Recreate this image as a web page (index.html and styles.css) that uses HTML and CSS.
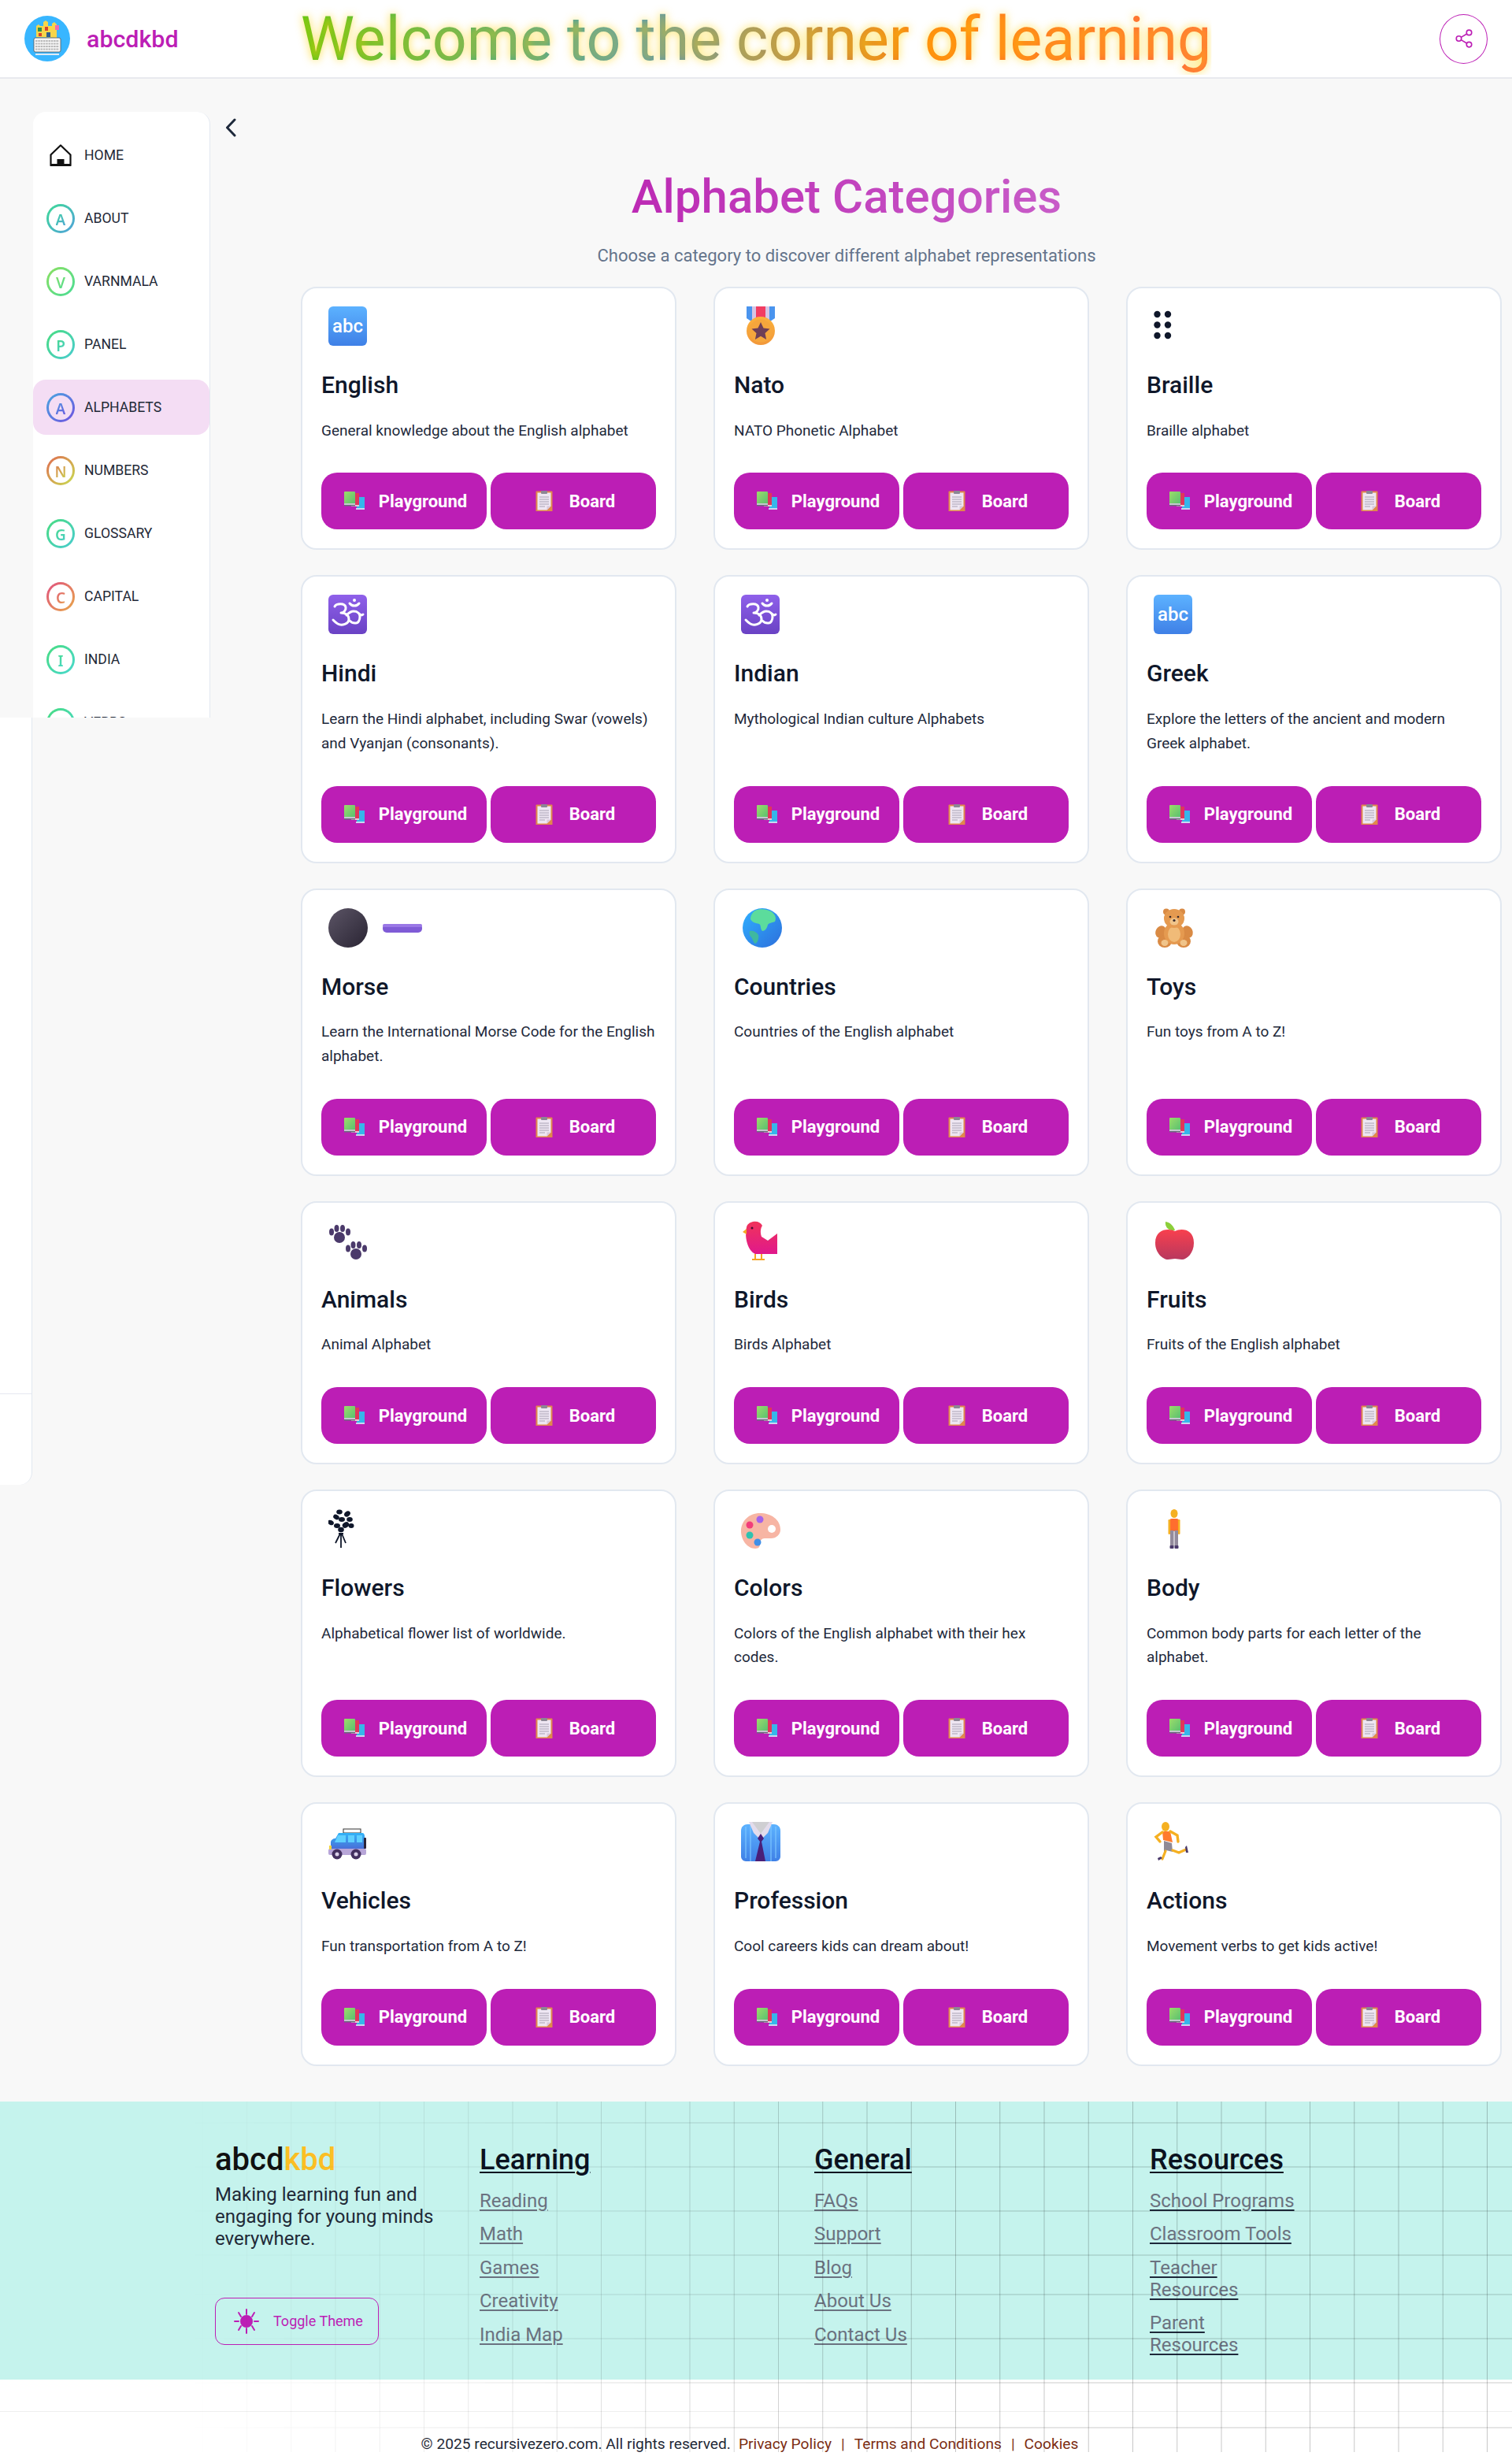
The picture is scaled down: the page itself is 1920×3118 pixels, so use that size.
FILE: index.html
```html
<!DOCTYPE html>
<html lang="en">
<head>
<meta charset="utf-8">
<title>abcdkbd</title>
<link rel="stylesheet" href="styles.css">
</head>
<body>
<svg class="defs" aria-hidden="true">
  <defs>
    <linearGradient id="g-blue" x1="0" y1="0" x2="0" y2="1"><stop offset="0" stop-color="#5cb2ff"/><stop offset="1" stop-color="#3f80e6"/></linearGradient>
    <linearGradient id="g-purple" x1="0" y1="0" x2="0" y2="1"><stop offset="0" stop-color="#8f60ea"/><stop offset="1" stop-color="#6a42c4"/></linearGradient>
    <linearGradient id="g-dark" x1="0" y1="0" x2="1" y2="1"><stop offset="0" stop-color="#5c5566"/><stop offset="1" stop-color="#2a2433"/></linearGradient>
    <linearGradient id="g-globe" x1="0" y1="0" x2="1" y2="1"><stop offset="0" stop-color="#2fb0ff"/><stop offset="1" stop-color="#2d6fdc"/></linearGradient>
    <linearGradient id="g-bird" x1="0" y1="0" x2="0" y2="1"><stop offset="0" stop-color="#f0345a"/><stop offset="1" stop-color="#e0188c"/></linearGradient>
    <linearGradient id="g-apple" x1="0" y1="0" x2="0" y2="1"><stop offset="0" stop-color="#f8404e"/><stop offset="1" stop-color="#b8385e"/></linearGradient>
    <linearGradient id="g-gold" x1="0" y1="0" x2="0" y2="1"><stop offset="0" stop-color="#fbb13c"/><stop offset="1" stop-color="#f2983a"/></linearGradient>
    <linearGradient id="g-book" x1="0" y1="0" x2="1" y2="1"><stop offset="0" stop-color="#9ddc6a"/><stop offset="1" stop-color="#58c070"/></linearGradient>
    <linearGradient id="g-car" x1="0" y1="0" x2="0" y2="1"><stop offset="0" stop-color="#32b4f8"/><stop offset="1" stop-color="#4a6fd8"/></linearGradient>

    <symbol id="i-abc" viewBox="0 0 120 50"><rect x="0" y="0" width="49" height="50" rx="6" fill="url(#g-blue)"/><text x="24.5" y="33" text-anchor="middle" class="key-text">abc</text></symbol>
    <symbol id="i-om" viewBox="0 0 120 50"><rect x="0" y="0" width="49" height="50" rx="6" fill="url(#g-purple)"/><g fill="none" stroke="#fff" stroke-width="3" stroke-linecap="round" stroke-linejoin="round"><path d="M8 15c2-4 13-5 14 1 .7 4-3 7-6 7 6 0 10 3 10 8 0 6-9 9-14 6-2-1-4-3-6-5"/><path d="M23 26c3-3 6-5 9-5 5 0 8 3 8 7 0 4-2 8-5 8-3 .5-6-1-8-3"/><path d="M39 24c2 2 4 2 5 1"/><path d="M27 11c3 4 9 4 12 0"/></g><circle cx="33" cy="7" r="2" fill="#fff"/></symbol>
    <symbol id="i-medal" viewBox="0 0 120 50"><path d="M7 0h36v15l-6 4H13l-6-4z" fill="#4a94ee"/><rect x="14" y="0" width="22" height="18" fill="#d6c6e4"/><rect x="19" y="0" width="12" height="18" fill="#f23d62"/><circle cx="25" cy="31" r="18" fill="url(#g-gold)"/><circle cx="25" cy="31" r="14.5" fill="#f5a63c"/><path d="M25 20l3.5 7.5 8 1-6 5.4 1.6 8L25 37.8 17.900 41.900l1.600-8-6-5.400 8-1z" fill="#6e3f57"/></symbol>
    <symbol id="i-braille" viewBox="0 0 120 50"><g fill="#0f172a"><circle cx="4.500" cy="10" r="4.200"/><circle cx="18" cy="10" r="4.200"/><circle cx="4.500" cy="23.500" r="4.200"/><circle cx="18" cy="23.500" r="4.200"/><circle cx="4.500" cy="37" r="4.200"/><circle cx="18" cy="37" r="4.200"/></g></symbol>
    <symbol id="i-morse" viewBox="0 0 120 50"><circle cx="25" cy="25" r="25" fill="url(#g-dark)"/><rect x="69" y="20" width="50" height="11" rx="5" fill="#7f5bd6"/><rect x="69" y="20" width="50" height="4" rx="2" fill="#9a78e6"/></symbol>
    <symbol id="i-globe" viewBox="0 0 120 50"><circle cx="27" cy="25" r="25" fill="url(#g-globe)"/><path d="M18 3c6-3 14-2 20 1 6 4 7 9 5 13-4 2-7 1-9 4-1 4-3 8-7 8-3-3-1-7-4-9-4-1-9-2-11-6 0-5 3-9 6-11z" fill="#5cdc9c"/><path d="M11 29c4-1 9 1 11 5 1 4-1 10-4 11-3-2-3-6-5-8-2-2-3-5-2-8z" fill="#3fb8a0"/></symbol>
    <symbol id="i-teddy" viewBox="0 0 120 50"><g fill="#d98a44"><circle cx="16" cy="4.500" r="4"/><circle cx="36" cy="4.500" r="4"/><ellipse cx="9" cy="30" rx="6.500" ry="8" transform="rotate(25 9 30)"/><ellipse cx="43" cy="30" rx="6.500" ry="8" transform="rotate(-25 43 30)"/><ellipse cx="14" cy="42" rx="9" ry="8"/><ellipse cx="38" cy="42" rx="9" ry="8"/></g><ellipse cx="26" cy="32" rx="13" ry="14" fill="#e59a50"/><ellipse cx="26" cy="33" rx="8" ry="10" fill="#f0bb78"/><ellipse cx="26" cy="13" rx="13" ry="12" fill="#e59a50"/><ellipse cx="26" cy="17" rx="5.500" ry="4.500" fill="#f0c48a"/><circle cx="26" cy="15.500" r="1.600" fill="#3a2a2a"/><circle cx="21" cy="11" r="1.300" fill="#3a2a2a"/><circle cx="31" cy="11" r="1.300" fill="#3a2a2a"/><ellipse cx="14" cy="44" rx="4.500" ry="4" fill="#f0c48a"/><ellipse cx="38" cy="44" rx="4.500" ry="4" fill="#f0c48a"/></symbol>
    <symbol id="i-paw" viewBox="0 0 120 50"><g fill="#4b3a6b"><ellipse cx="14" cy="21" rx="7" ry="7"/><ellipse cx="4" cy="14" rx="3" ry="4.500"/><ellipse cx="10.500" cy="9.500" rx="3" ry="4.500"/><ellipse cx="18" cy="9.500" rx="3" ry="4.500"/><ellipse cx="25" cy="14" rx="3" ry="4.500"/><ellipse cx="35" cy="42" rx="7" ry="7"/><ellipse cx="25" cy="35" rx="3" ry="4.500"/><ellipse cx="31.500" cy="30.500" rx="3" ry="4.500"/><ellipse cx="39" cy="30.500" rx="3" ry="4.500"/><ellipse cx="46" cy="35" rx="3" ry="4.500"/></g></symbol>
    <symbol id="i-bird" viewBox="0 0 120 50"><path d="M15 1c6-1 10 1 12 5-2 3-3 8-1 14l8 5 12-9v26H18C9 38 4 22 7 8c1-4 4-6 8-7z" fill="url(#g-bird)"/><path d="M7 10L2 14l5 3z" fill="#f5a623"/><circle cx="14" cy="9" r="1.500" fill="#4a1030"/><path d="M18 42v6M26 42v6M14 49h8M22 49h8" stroke="#f5a623" stroke-width="2" fill="none"/></symbol>
    <symbol id="i-apple" viewBox="0 0 120 50"><path d="M27 12c-2-6-6-10-12-11-1 7 4 12 12 11z" fill="#8ccf3a"/><path d="M27 13c8-4 24-3 24 15 0 13-9 21-15 21-4 0-6-1-9-1s-5 1-9 1C12 49 2 41 2 28 2 10 19 9 27 13z" fill="url(#g-apple)"/></symbol>
    <symbol id="i-flowers" viewBox="0 0 120 50"><g fill="#0f172a"><ellipse cx="14" cy="3.500" rx="3.800" ry="3"/><ellipse cx="10" cy="10" rx="4" ry="3" transform="rotate(30 10 10)"/><ellipse cx="24" cy="6" rx="4.200" ry="3.200" transform="rotate(-40 24 6)"/><ellipse cx="27" cy="13" rx="3.800" ry="3"/><ellipse cx="17" cy="13" rx="4" ry="3"/><ellipse cx="3" cy="17" rx="4" ry="3" transform="rotate(25 3 17)"/><ellipse cx="11" cy="21" rx="4" ry="3"/><ellipse cx="22" cy="20" rx="4.500" ry="3.400" transform="rotate(-30 22 20)"/><ellipse cx="29" cy="21" rx="3.500" ry="3"/><ellipse cx="16" cy="26" rx="3.800" ry="3.200"/></g><path d="M16 31v18M15 31L9 43M17 31l5 12M13 31h6" stroke="#0f172a" stroke-width="1.800" fill="none"/></symbol>
    <symbol id="i-palette" viewBox="0 0 120 50"><path d="M24 5C10 5 0 15 0 28c0 11 8 22 18 22 5 0 6-3 6-6 0-4 2-7 6-7h8c7 0 12-5 12-11C50 13 38 5 24 5z" fill="#f7b5a4"/><circle cx="24" cy="13" r="4.500" fill="#a463ea"/><circle cx="11" cy="20" r="4.500" fill="#f23d7a"/><circle cx="11" cy="33" r="4.500" fill="#2fc2b0"/><circle cx="21" cy="42" r="4.500" fill="#3f8fe8"/><circle cx="39" cy="25" r="5" fill="#fff"/></symbol>
    <symbol id="i-person" viewBox="0 0 120 50"><ellipse cx="26" cy="5.500" rx="4.500" ry="5.500" fill="#f5b021"/><rect x="20" y="12" width="12" height="16" rx="3" fill="#ff6d2e"/><rect x="18.500" y="13" width="2.600" height="19" rx="1.300" fill="#f5b021"/><rect x="30.900" y="13" width="2.600" height="19" rx="1.300" fill="#f5b021"/><rect x="21" y="27" width="4.500" height="20" fill="#938a9c"/><rect x="26.500" y="27" width="4.500" height="20" fill="#938a9c"/><rect x="20.500" y="46" width="5" height="4" rx="1" fill="#4b3a6b"/><rect x="26.500" y="46" width="5" height="4" rx="1" fill="#4b3a6b"/></symbol>
    <symbol id="i-car" viewBox="0 0 120 50"><rect x="19" y="9" width="22" height="5" fill="#fff" stroke="#333" stroke-width="1"/><path d="M13 14h30c2 0 3 2 3 4v16H3v-8c0-3 3-5 6-5z" fill="url(#g-car)"/><path d="M12 17h10v9H8zM25 17h8v9h-8zM36 17h7v9h-7z" fill="#5fd0ff"/><rect x="45" y="20" width="3" height="14" rx="1" fill="#2d2438"/><rect x="0" y="34" width="48" height="8" rx="2" fill="#b8a6d8"/><rect x="1" y="30" width="3" height="5" fill="#f2d23c"/><circle cx="11" cy="41" r="6.500" fill="#43305f"/><circle cx="11" cy="41" r="2.500" fill="#d8cfe8"/><circle cx="35" cy="41" r="6.500" fill="#43305f"/><circle cx="35" cy="41" r="2.500" fill="#d8cfe8"/></symbol>
    <symbol id="i-suit" viewBox="0 0 120 50"><path d="M8 3h34c4 0 8 3 8 8v33c0 3-3 6-6 6H6c-3 0-6-3-6-6V11c0-5 4-8 8-8z" fill="url(#g-blue)"/><path d="M6 6v40M12 4v46M38 4v46M44 6v40" stroke="#7cc6ff" stroke-width="1.200"/><path d="M10 0h30l-6 14-9 9-9-9z" fill="#e3dcec"/><path d="M14 0h22l-11 15z" fill="#cfcfd2"/><path d="M25 15l4 6-3 4 5 25H18l6-25-3-4z" fill="#4a1f78"/></symbol>
    <symbol id="i-run" viewBox="0 0 120 50"><ellipse cx="15" cy="6" rx="5" ry="6" fill="#f5b021"/><path d="M11 12h10l3 14-12-3z" fill="#ff7a2e"/><path d="M11 13l-8 6 5 6M21 12l9 5 1 8" stroke="#f5b021" stroke-width="3.400" fill="none" stroke-linecap="round"/><path d="M13 24l10 3 1 11-8-2-3 3z" fill="#8f8a96"/><path d="M15 37l-4 10M24 36l8 3 9-4" stroke="#f5b021" stroke-width="3.200" fill="none" stroke-linecap="round"/><path d="M6 49l5-3-2-2-4 2z" fill="#4b3a6b"/><path d="M42 30l2 9-3 0-1-7z" fill="#4b3a6b"/></symbol>
    <symbol id="i-books" viewBox="0 0 32 26"><rect x="20" y="8" width="10" height="16" fill="#36b6ea"/><rect x="19" y="22" width="11" height="2" fill="#c8d8f0"/><rect x="14" y="3" width="9" height="17" fill="#e0365a"/><rect x="13" y="18" width="10" height="2" fill="#e8c8d8"/><rect x="4" y="1" width="14" height="16" rx="1" fill="url(#g-book)"/><rect x="4" y="16" width="14" height="2" fill="#c6c6d0"/><rect x="4" y="18" width="14" height="1.500" fill="#6a6a7c"/></symbol>
    <symbol id="i-clip" viewBox="0 0 32 26"><rect x="5.500" y="0.500" width="21" height="26" rx="1" fill="#e0884c"/><path d="M7.500 2.500h17v17l-5 5h-12z" fill="#eee6f2"/><path d="M24.500 19.500l-5 5v-5z" fill="#d8c8dc"/><rect x="12" y="0" width="8" height="4" rx="1" fill="#8b8794"/><path d="M10 8h12M10 11h12M10 14h12M10 17h12M10 20h7" stroke="#a8a2b4" stroke-width="1"/></symbol>
  </defs>
</svg>

<header class="topbar">
  <a class="brand" href="#">
    <svg class="logo" viewBox="0 0 58 58" aria-hidden="true">
      <circle cx="29" cy="29" r="29" fill="#38b6ff"/>
      <path d="M15 27V13l3-2 2 2h4V8l3-2 3 2v5h5v-3l3-2 3 3v17z" fill="#f7d54a"/>
      <rect x="17" y="15" width="5" height="5" fill="#2f8f4e"/><rect x="26" y="14" width="4" height="5" fill="#d8432e"/><rect x="39" y="12" width="5" height="6" fill="#f06bb0"/><rect x="18" y="22" width="4" height="4" fill="#d8432e"/><rect x="28" y="21" width="5" height="6" fill="#2f5f8f"/>
      <rect x="12" y="28" width="34" height="18" rx="2" fill="#f6f6f6" stroke="#555" stroke-width="0.800"/>
      <path d="M14 32h30M14 35.500h30M14 39h30M14 42.500h30" stroke="#b8b8b8" stroke-width="2" stroke-dasharray="2.500 .8"/>
      <rect x="14" y="48" width="30" height="2" fill="#dfeaf4"/>
    </svg>
    <span class="brand-name">abcdkbd</span>
  </a>
  <h1 class="welcome">Welcome to the corner of learning</h1>
  <button class="share" type="button" aria-label="Share">
    <svg viewBox="0 0 24 24" fill="none" stroke="#bc1eb5" stroke-width="1.500"><circle cx="18" cy="5" r="3"/><circle cx="6" cy="12" r="3"/><circle cx="18" cy="19" r="3"/><path d="M8.600 13.500l6.800 4M15.400 6.500l-6.800 4"/></svg>
  </button>
</header>

<div class="page">
  <div class="rail">
    <div class="rail-top">
      <nav class="sidebar">
        <a class="nav-item" href="#"><svg class="home" viewBox="0 0 28 28" aria-hidden="true"><path d="M14 1.500L1.500 13.500v13.500h25V13.500z" fill="none" stroke="#111" stroke-width="2.200" stroke-linejoin="round"/><path d="M9.500 27v-8h9v8z" fill="#111"/><rect x="1" y="25" width="26" height="3" fill="#111"/></svg><span>HOME</span></a>
        <a class="nav-item t-about" href="#"><i class="ring"><b>A</b></i><span>ABOUT</span></a>
        <a class="nav-item t-varn" href="#"><i class="ring"><b>V</b></i><span>VARNMALA</span></a>
        <a class="nav-item t-panel" href="#"><i class="ring"><b>P</b></i><span>PANEL</span></a>
        <a class="nav-item t-alpha active" href="#"><i class="ring"><b>A</b></i><span>ALPHABETS</span></a>
        <a class="nav-item t-num" href="#"><i class="ring"><b>N</b></i><span>NUMBERS</span></a>
        <a class="nav-item t-panel" href="#"><i class="ring"><b>G</b></i><span>GLOSSARY</span></a>
        <a class="nav-item t-cap" href="#"><i class="ring"><b>C</b></i><span>CAPITAL</span></a>
        <a class="nav-item t-india" href="#"><i class="ring"><b>I</b></i><span>INDIA</span></a>
        <a class="nav-item t-india" href="#"><i class="ring"><b>V</b></i><span>VERBS</span></a>
      </nav>
      <svg class="collapse" viewBox="0 0 14 24" fill="none" stroke="#1e293b" stroke-width="3" stroke-linecap="round" stroke-linejoin="round" aria-hidden="true"><path d="M12 2L2.500 12 12 22"/></svg>
    </div>
    <div class="rail-strip"><div class="rail-strip-line"></div></div>
  </div>

  <main class="content">
    <div class="intro">
      <h2 class="intro-title">Alphabet Categories</h2>
      <p class="intro-sub">Choose a category to discover different alphabet representations</p>
    </div>
    <section class="cards">
      <article class="card"><svg class="card-icon"><use href="#i-abc"/></svg><h3>English</h3><p>General knowledge about the English alphabet</p><div class="actions"><a class="btn" href="#"><svg class="btn-ic"><use href="#i-books"/></svg>Playground</a><a class="btn" href="#"><svg class="btn-ic"><use href="#i-clip"/></svg>Board</a></div></article>
      <article class="card"><svg class="card-icon"><use href="#i-medal"/></svg><h3>Nato</h3><p>NATO Phonetic Alphabet</p><div class="actions"><a class="btn" href="#"><svg class="btn-ic"><use href="#i-books"/></svg>Playground</a><a class="btn" href="#"><svg class="btn-ic"><use href="#i-clip"/></svg>Board</a></div></article>
      <article class="card"><svg class="card-icon"><use href="#i-braille"/></svg><h3>Braille</h3><p>Braille alphabet</p><div class="actions"><a class="btn" href="#"><svg class="btn-ic"><use href="#i-books"/></svg>Playground</a><a class="btn" href="#"><svg class="btn-ic"><use href="#i-clip"/></svg>Board</a></div></article>

      <article class="card"><svg class="card-icon"><use href="#i-om"/></svg><h3>Hindi</h3><p>Learn the Hindi alphabet, including Swar (vowels) and Vyanjan (consonants).</p><div class="actions"><a class="btn" href="#"><svg class="btn-ic"><use href="#i-books"/></svg>Playground</a><a class="btn" href="#"><svg class="btn-ic"><use href="#i-clip"/></svg>Board</a></div></article>
      <article class="card"><svg class="card-icon"><use href="#i-om"/></svg><h3>Indian</h3><p>Mythological Indian culture Alphabets</p><div class="actions"><a class="btn" href="#"><svg class="btn-ic"><use href="#i-books"/></svg>Playground</a><a class="btn" href="#"><svg class="btn-ic"><use href="#i-clip"/></svg>Board</a></div></article>
      <article class="card"><svg class="card-icon"><use href="#i-abc"/></svg><h3>Greek</h3><p>Explore the letters of the ancient and modern Greek alphabet.</p><div class="actions"><a class="btn" href="#"><svg class="btn-ic"><use href="#i-books"/></svg>Playground</a><a class="btn" href="#"><svg class="btn-ic"><use href="#i-clip"/></svg>Board</a></div></article>

      <article class="card"><svg class="card-icon"><use href="#i-morse"/></svg><h3>Morse</h3><p>Learn the International Morse Code for the English alphabet.</p><div class="actions"><a class="btn" href="#"><svg class="btn-ic"><use href="#i-books"/></svg>Playground</a><a class="btn" href="#"><svg class="btn-ic"><use href="#i-clip"/></svg>Board</a></div></article>
      <article class="card"><svg class="card-icon"><use href="#i-globe"/></svg><h3>Countries</h3><p>Countries of the English alphabet</p><div class="actions"><a class="btn" href="#"><svg class="btn-ic"><use href="#i-books"/></svg>Playground</a><a class="btn" href="#"><svg class="btn-ic"><use href="#i-clip"/></svg>Board</a></div></article>
      <article class="card"><svg class="card-icon"><use href="#i-teddy"/></svg><h3>Toys</h3><p>Fun toys from A to Z!</p><div class="actions"><a class="btn" href="#"><svg class="btn-ic"><use href="#i-books"/></svg>Playground</a><a class="btn" href="#"><svg class="btn-ic"><use href="#i-clip"/></svg>Board</a></div></article>

      <article class="card"><svg class="card-icon"><use href="#i-paw"/></svg><h3>Animals</h3><p>Animal Alphabet</p><div class="actions"><a class="btn" href="#"><svg class="btn-ic"><use href="#i-books"/></svg>Playground</a><a class="btn" href="#"><svg class="btn-ic"><use href="#i-clip"/></svg>Board</a></div></article>
      <article class="card"><svg class="card-icon"><use href="#i-bird"/></svg><h3>Birds</h3><p>Birds Alphabet</p><div class="actions"><a class="btn" href="#"><svg class="btn-ic"><use href="#i-books"/></svg>Playground</a><a class="btn" href="#"><svg class="btn-ic"><use href="#i-clip"/></svg>Board</a></div></article>
      <article class="card"><svg class="card-icon"><use href="#i-apple"/></svg><h3>Fruits</h3><p>Fruits of the English alphabet</p><div class="actions"><a class="btn" href="#"><svg class="btn-ic"><use href="#i-books"/></svg>Playground</a><a class="btn" href="#"><svg class="btn-ic"><use href="#i-clip"/></svg>Board</a></div></article>

      <article class="card"><svg class="card-icon"><use href="#i-flowers"/></svg><h3>Flowers</h3><p>Alphabetical flower list of worldwide.</p><div class="actions"><a class="btn" href="#"><svg class="btn-ic"><use href="#i-books"/></svg>Playground</a><a class="btn" href="#"><svg class="btn-ic"><use href="#i-clip"/></svg>Board</a></div></article>
      <article class="card"><svg class="card-icon"><use href="#i-palette"/></svg><h3>Colors</h3><p>Colors of the English alphabet with their hex codes.</p><div class="actions"><a class="btn" href="#"><svg class="btn-ic"><use href="#i-books"/></svg>Playground</a><a class="btn" href="#"><svg class="btn-ic"><use href="#i-clip"/></svg>Board</a></div></article>
      <article class="card"><svg class="card-icon"><use href="#i-person"/></svg><h3>Body</h3><p>Common body parts for each letter of the alphabet.</p><div class="actions"><a class="btn" href="#"><svg class="btn-ic"><use href="#i-books"/></svg>Playground</a><a class="btn" href="#"><svg class="btn-ic"><use href="#i-clip"/></svg>Board</a></div></article>

      <article class="card"><svg class="card-icon"><use href="#i-car"/></svg><h3>Vehicles</h3><p>Fun transportation from A to Z!</p><div class="actions"><a class="btn" href="#"><svg class="btn-ic"><use href="#i-books"/></svg>Playground</a><a class="btn" href="#"><svg class="btn-ic"><use href="#i-clip"/></svg>Board</a></div></article>
      <article class="card"><svg class="card-icon"><use href="#i-suit"/></svg><h3>Profession</h3><p>Cool careers kids can dream about!</p><div class="actions"><a class="btn" href="#"><svg class="btn-ic"><use href="#i-books"/></svg>Playground</a><a class="btn" href="#"><svg class="btn-ic"><use href="#i-clip"/></svg>Board</a></div></article>
      <article class="card"><svg class="card-icon"><use href="#i-run"/></svg><h3>Actions</h3><p>Movement verbs to get kids active!</p><div class="actions"><a class="btn" href="#"><svg class="btn-ic"><use href="#i-books"/></svg>Playground</a><a class="btn" href="#"><svg class="btn-ic"><use href="#i-clip"/></svg>Board</a></div></article>
    </section>
  </main>
</div>

<footer class="footer">
  <div class="footer-main">
    <div class="f-brand">
      <div class="f-logo">abcd<span>kbd</span></div>
      <p class="f-tag">Making learning fun and engaging for young minds everywhere.</p>
      <button class="toggle" type="button">
        <svg viewBox="0 0 32 32" aria-hidden="true"><circle cx="16" cy="16" r="8" fill="#bc1eb5"/><path d="M16 1v6M16 25v6M1 16h5M26 16h5M6 5l3 5M26 5l-3 5M6 27l3-5M26 27l-3-5" stroke="#bc1eb5" stroke-width="2" stroke-linecap="round"/></svg>
        Toggle Theme
      </button>
    </div>
    <div class="f-col f-col-learn"><h4><a href="#">Learning</a></h4><ul><li><a href="#">Reading</a></li><li><a href="#">Math</a></li><li><a href="#">Games</a></li><li><a href="#">Creativity</a></li><li><a href="#">India Map</a></li></ul></div>
    <div class="f-col f-col-gen"><h4><a href="#">General</a></h4><ul><li><a href="#">FAQs</a></li><li><a href="#">Support</a></li><li><a href="#">Blog</a></li><li><a href="#">About Us</a></li><li><a href="#">Contact Us</a></li></ul></div>
    <div class="f-col f-col-res"><h4><a href="#">Resources</a></h4><ul><li><a href="#">School Programs</a></li><li><a href="#">Classroom Tools</a></li><li><a href="#">Teacher Resources</a></li><li><a href="#">Parent Resources</a></li></ul></div>
  </div>
  <div class="legal">
    <span>© 2025 recursivezero.com. All rights reserved.</span>
    <a href="#">Privacy Policy</a><em>|</em><a href="#">Terms and Conditions</a><em>|</em><a href="#">Cookies</a>
  </div>
  <div class="f-grid" aria-hidden="true"></div>
</footer>
</body>
</html>
```
FILE: styles.css
```css
* { box-sizing: border-box; }
html, body { margin: 0; padding: 0; }
body {
  background: #f8f8f8;
  color: #0f172a;
  font-family: Roboto, "Liberation Sans", sans-serif;
  width: 1920px;
  height: 3118px;
  overflow: hidden;
}
a { color: inherit; text-decoration: none; }
h1, h2, h3, h4, p, ul { margin: 0; padding: 0; }
.defs { position: absolute; width: 0; height: 0; }
.key-text { font: 500 24px Roboto, sans-serif; fill: #fff; }

/* Header */
.topbar {
  height: 100px;
  background: #fff;
  border-bottom: 2px solid #e8eaee;
  padding: 0 31px;
  display: grid;
  grid-template-columns: 1fr auto 1fr;
  align-items: center;
}
.brand { display: flex; align-items: center; gap: 21px; }
.logo { width: 58px; height: 58px; display: block; }
.brand-name { font-size: 30.4px; font-weight: 500; color: #bc1eb5; }
.welcome {
  font-size: 77px;
  font-weight: 400;
  margin-top: 2px;
  background: linear-gradient(90deg, #4cc418 0%, #3f98c8 36%, #ff7a10 68%, #ff6048 100%);
  -webkit-background-clip: text;
  background-clip: text;
  color: transparent;
  text-shadow: 0 0 12px rgba(255, 210, 0, .7);
  clip-path: inset(-12px 0 0 -12px);
  white-space: nowrap;
}
.share {
  justify-self: end;
  width: 61px;
  height: 63px;
  border: 1px solid #bc1eb5;
  border-radius: 50%;
  background: #fff;
  padding: 0;
  display: flex;
  align-items: center;
  justify-content: center;
}
.share svg { width: 26px; height: 26px; }

/* Page */
.page { display: flex; align-items: flex-start; }
.rail { width: 382px; flex: none; }
.rail-top { display: flex; align-items: flex-start; padding: 42px 0 0 42px; }
.sidebar {
  width: 225px;
  height: 769px;
  overflow: hidden;
  background: #fff;
  border-right: 1px solid #e2e8f0;
  border-radius: 16px 16px 0 0;
  padding-top: 20px;
  display: flex;
  flex-direction: column;
  gap: 10px;
}
.nav-item {
  flex: none;
  height: 70px;
  border-radius: 16px;
  padding-left: 17px;
  display: flex;
  align-items: center;
  gap: 12px;
  font-size: 17.6px;
  color: #1f2937;
}
.nav-item.active { background: #f4ddf4; }
.home { width: 28px; height: 28px; margin: 0 4px; flex: none; }
.ring {
  flex: none;
  width: 36px;
  height: 37px;
  border: 3px solid transparent;
  border-radius: 50%;
  background: linear-gradient(#fff, #fff) padding-box, linear-gradient(135deg, var(--a), var(--b)) border-box;
  display: flex;
  align-items: center;
  justify-content: center;
  font-style: normal;
}
.active .ring { background: linear-gradient(#f4ddf4, #f4ddf4) padding-box, linear-gradient(135deg, var(--a), var(--b)) border-box; }
.ring b {
  font: 600 19px "Noto Sans", sans-serif;
  padding-top: 3px;
  background: linear-gradient(135deg, var(--a), var(--b));
  -webkit-background-clip: text;
  background-clip: text;
  color: transparent;
}
.t-about { --a: #3fdc96; --b: #4fa0dc; }
.t-varn { --a: #8ce060; --b: #48dc96; }
.t-panel { --a: #48dc80; --b: #48ccd0; }
.t-alpha { --a: #48a8e0; --b: #7050e0; }
.t-num { --a: #e06850; --b: #c8e050; }
.t-cap { --a: #e05080; --b: #e8a848; }
.t-india { --a: #48dc80; --b: #48d8d0; }
.collapse { width: 14px; height: 24px; margin: 8px 0 0 19px; flex: none; }
.rail-strip {
  width: 41px;
  height: 974px;
  background: #fff;
  border-right: 1px solid #e2e8f0;
  border-bottom-right-radius: 16px;
  padding-top: 858px;
}
.rail-strip-line { height: 1px; background: #e6e8f0; }

/* Main */
.content { width: 1525px; }
.intro { width: 1386px; text-align: center; padding-top: 112px; }
.intro-title {
  font-size: 60px;
  font-weight: 500;
  line-height: 75px;
  background: linear-gradient(90deg, #bc2ab4, #c85cc8);
  -webkit-background-clip: text;
  background-clip: text;
  color: transparent;
  width: max-content;
  margin: 0 auto;
}
.intro-sub { font-size: 22px; line-height: 28px; color: #64748b; margin-top: 24px; }
.cards {
  margin-top: 25px;
  display: grid;
  grid-template-columns: repeat(3, 477px);
  column-gap: 47px;
  row-gap: 32px;
}
.card {
  background: #fff;
  border: 2px solid #e2e8f0;
  border-radius: 20px;
  padding: 23px 24px 24px;
  display: flex;
  flex-direction: column;
}
.card-icon { width: 120px; height: 50px; margin-left: 9px; overflow: visible; flex: none; }
.card h3 { font-size: 30px; font-weight: 500; line-height: 36px; margin-top: 32px; color: #0f172a; }
.card p { font-size: 19px; line-height: 30.6px; margin-top: 24.5px; margin-bottom: 38.4px; color: #1e293b; }
.actions { margin-top: auto; display: flex; gap: 5px; }
.btn {
  flex: 1;
  height: 72px;
  border-radius: 20px;
  background: #bc1eb5;
  color: #fff;
  font-size: 22px;
  font-weight: 700;
  display: flex;
  align-items: center;
  justify-content: center;
  gap: 16px;
}
.btn-ic { width: 32px; height: 26px; flex: none; }

/* Footer */
.footer { position: relative; margin-top: 45px; background: #fff; height: 460px; }
.footer-main {
  background: #c5f3ed;
  height: 353px;
  padding: 50px 0 0 273px;
  display: grid;
  grid-template-columns: 336px 425px 426px 1fr;
}
.f-logo { font-size: 40px; font-weight: 500; line-height: 48px; color: #111; }
.f-logo span { color: #fbbf24; }
.f-tag { width: 290px; font-size: 24px; line-height: 28px; margin-top: 6px; color: #1f2937; }
.toggle {
  margin-top: 61px;
  width: 208px;
  height: 60px;
  border: 1px solid #bc1eb5;
  border-radius: 12px;
  background: transparent;
  color: #bc1eb5;
  font: 400 18px Roboto, sans-serif;
  padding: 0 0 0 23px;
  display: flex;
  align-items: center;
  gap: 18px;
}
.toggle svg { width: 32px; height: 32px; }
.f-col h4 { font-size: 36px; font-weight: 500; line-height: 48px; color: #0b1220; }
.f-col h4 a { text-decoration: underline; text-decoration-thickness: 2px; text-underline-offset: 3px; }
.f-col ul { list-style: none; margin-top: 14px; display: flex; flex-direction: column; gap: 14.500px; }
.f-col li { font-size: 24px; line-height: 28px; color: #6b7280; }
.f-col li a { text-decoration: underline; text-underline-offset: 3px; text-decoration-thickness: 2px; }
.f-col-res { width: 185px; }
.f-col-res li a { text-decoration-color: #1e293b; }
.f-col-res h4 { white-space: nowrap; }
.legal {
  margin-top: 40px;
  border-top: 1px solid #eeeeee;
  padding-top: 29px;
  display: flex;
  justify-content: center;
  font-size: 19.2px;
  line-height: 24px;
  color: #1f2937;
  padding-right: 16px;
}
.legal a { color: #7c2d12; }
.legal span { margin-right: 10px; }
.legal em { font-style: normal; margin: 0 12px; color: #7c2d12; }
.f-grid {
  position: absolute;
  left: 0;
  top: 0;
  right: 0;
  height: 445px;
  pointer-events: none;
  background-image:
    linear-gradient(90deg, rgba(0,0,0,.22) 1px, transparent 1px),
    linear-gradient(rgba(0,0,0,.1), rgba(0,0,0,.1)),
    linear-gradient(rgba(0,0,0,.1), rgba(0,0,0,.1)),
    linear-gradient(rgba(0,0,0,.1), rgba(0,0,0,.1)),
    linear-gradient(rgba(0,0,0,.1), rgba(0,0,0,.1)),
    linear-gradient(rgba(0,0,0,.1), rgba(0,0,0,.1)),
    linear-gradient(rgba(0,0,0,.1), rgba(0,0,0,.1)),
    linear-gradient(rgba(0,0,0,.1), rgba(0,0,0,.1)),
    linear-gradient(rgba(0,0,0,.1), rgba(0,0,0,.1));
  background-repeat: repeat-x, no-repeat, no-repeat, no-repeat, no-repeat, no-repeat, no-repeat, no-repeat, no-repeat;
  background-size: 56.25px 100%, 100% 2px, 100% 2px, 100% 2px, 100% 2px, 100% 2px, 100% 2px, 100% 2px, 100% 2px;
  background-position: 31.75px 0, 0 26px, 0 82px, 0 138px, 0 194px, 0 244px, 0 300px, 0 356px, 0 413px;
  -webkit-mask-image: linear-gradient(90deg, transparent 12%, #000 62%);
  mask-image: linear-gradient(90deg, transparent 12%, #000 62%);
}
```
